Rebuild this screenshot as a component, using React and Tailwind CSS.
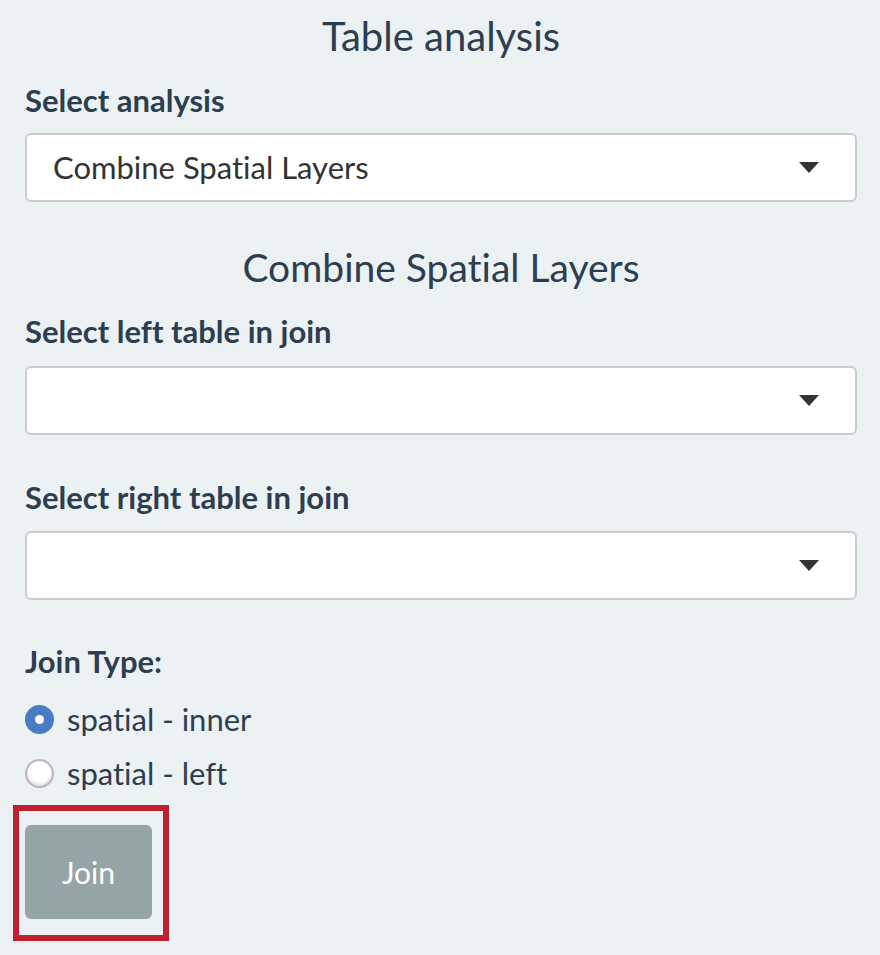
import React, { useState } from "react";

const tables = ["Combine Spatial Layers"];

const Caret = () => (
  <svg width="20" height="11" viewBox="0 0 20 11" className="shrink-0">
    <path d="M0 0 H20 L10 11 Z" fill="#333333" />
  </svg>
);

const SelectBox = ({ value }) => (
  <div className="flex h-[69px] items-center justify-between rounded-[6px] border-2 border-[#cccccc] bg-white pl-[26px] pr-[36px]">
    <span className="text-[31px] leading-none text-[#333333]">{value}</span>
    <Caret />
  </div>
);

const Label = ({ children, className = "" }) => (
  <div className={`text-[31px] font-bold leading-[36px] text-[#2c3e50] ${className}`}>
    {children}
  </div>
);

const Radio = ({ checked, label, onClick }) => (
  <div className="flex h-[54px] cursor-pointer items-center" onClick={onClick}>
    {checked ? (
      <span className="flex h-[29px] w-[29px] items-center justify-center rounded-full bg-[#4a7cc4]">
        <span className="h-[9px] w-[9px] rounded-full bg-white" />
      </span>
    ) : (
      <span className="h-[29px] w-[29px] rounded-full border-2 border-[#b8b8b8] bg-white shadow-[inset_0_-2px_3px_rgba(0,0,0,0.12)]" />
    )}
    <span className="ml-[13px] text-[31px] leading-none text-[#2c3e50]">{label}</span>
  </div>
);

export default function App() {
  const [joinType, setJoinType] = useState("inner");

  return (
    <div
      className="min-h-screen w-[880px] bg-[#ecf1f4] pl-[25px] pr-[23px] pt-[14px] [font-variant-ligatures:none]"
      style={{ fontFamily: "Lato, 'Open Sans', sans-serif" }}
    >
      <h3 className="text-center text-[40px] leading-[44px] text-[#2c3e50]">Table analysis</h3>

      <Label className="mt-[24px]">Select analysis</Label>
      <div className="mt-[15px]">
        <SelectBox value={tables[0]} />
      </div>

      <h4 className="mt-[43px] text-center text-[39px] leading-[44px] text-[#2c3e50]">
        Combine Spatial Layers
      </h4>

      <Label className="mt-[24px]">Select left table in join</Label>
      <div className="mt-[17px]">
        <SelectBox value="" />
      </div>

      <Label className="mt-[44px]">Select right table in join</Label>
      <div className="mt-[16px]">
        <SelectBox value="" />
      </div>

      <Label className="mt-[43px]">Join Type:</Label>
      <div className="mt-[13px]">
        <Radio
          checked={joinType === "inner"}
          label="spatial - inner"
          onClick={() => setJoinType("inner")}
        />
        <Radio
          checked={joinType === "left"}
          label="spatial - left"
          onClick={() => setJoinType("left")}
        />
      </div>

      <div className="-ml-[12px] mt-[5px] h-[136px] w-[156px] border-[6px] border-[#c01f2f] pl-[6px] pt-[14px]">
        <button className="h-[94px] w-[127px] rounded-[6px] bg-[#95a5a6] text-[30px] text-white">
          Join
        </button>
      </div>
    </div>
  );
}
